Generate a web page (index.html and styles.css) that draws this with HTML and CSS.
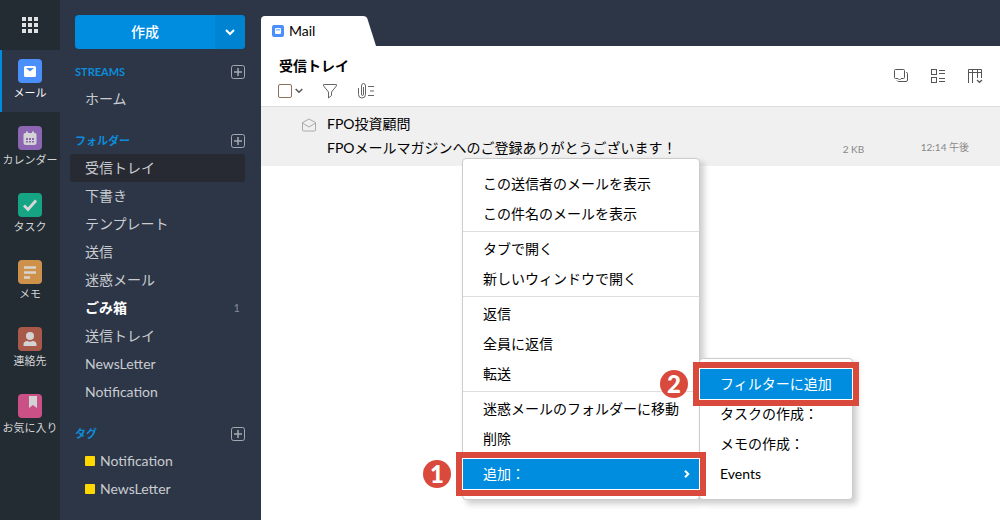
FILE: index.html
```html
<!DOCTYPE html>
<html lang="ja">
<head>
<meta charset="utf-8">
<meta name="viewport" content="width=device-width, initial-scale=1">
<title>Mail</title>
<link rel="stylesheet" href="styles.css">
</head>
<body>
<div class="app">
  <nav class="rail" aria-label="アプリ">
    <button class="launcher" type="button" aria-label="アプリ一覧">
      <svg width="16" height="16" viewBox="0 0 16 16" fill="#dfe1e3"><path d="M0 0h4v4H0zM6 0h4v4H6zM12 0h4v4h-4zM0 6h4v4H0zM6 6h4v4H6zM12 6h4v4h-4zM0 12h4v4H0zM6 12h4v4H6zM12 12h4v4h-4z"/></svg>
    </button>
    <ul class="rail-list">
      <li><a class="rail-item current" href="#mail">
        <svg width="24" height="24" viewBox="0 0 24 24"><rect width="24" height="24" rx="4" fill="#4a8ffa"/><rect x="6" y="7" width="12" height="11" rx="1.5" fill="#fff"/><path d="M8 9h8l-4 3.4z" fill="#4a8ffa"/></svg>
        <span>メール</span></a></li>
      <li><a class="rail-item" href="#calendar">
        <svg width="24" height="24" viewBox="0 0 24 24"><rect width="24" height="24" rx="4" fill="#8c66b2"/><path d="M7 7h1V5.500h2V7h4V5.500h2V7h1q1.500 0 1.500 1.500v8Q18.500 19 16 19H8q-2.500 0-2.500-2.500v-8Q5.500 7 7 7z" fill="#d3d3d3"/><path d="M8 12h2v2H8zM11 12h2v2h-2zM14 12h2v2h-2zM8 15h2v1.500H8zM11 15h2v1.500h-2zM14 15h2v1.500h-2z" fill="#8c66b2"/></svg>
        <span>カレンダー</span></a></li>
      <li><a class="rail-item" href="#tasks">
        <svg width="24" height="24" viewBox="0 0 24 24"><rect width="24" height="24" rx="4" fill="#15a584"/><path d="M6 12.500l4 4 8-9" fill="none" stroke="#d8d8d8" stroke-width="2.800"/></svg>
        <span>タスク</span></a></li>
      <li><a class="rail-item" href="#notes">
        <svg width="24" height="24" viewBox="0 0 24 24"><rect width="24" height="24" rx="4" fill="#ce914c"/><path d="M6 7.500h12M6 12.500h12M6 17.500h6" stroke="#d8d3cc" stroke-width="2.400"/></svg>
        <span>メモ</span></a></li>
      <li><a class="rail-item" href="#contacts">
        <svg width="24" height="24" viewBox="0 0 24 24"><rect width="24" height="24" rx="4" fill="#a8594a"/><circle cx="12" cy="9" r="4" fill="#d3d3d3"/><path d="M5.500 19v-1.500q0-3.500 4-3.500 2.500 1.500 5 0 4 0 4 3.500V19z" fill="#d3d3d3"/></svg>
        <span>連絡先</span></a></li>
      <li><a class="rail-item" href="#bookmarks">
        <svg width="24" height="24" viewBox="0 0 24 24"><rect width="24" height="24" rx="4" fill="#cb5085"/><path d="M11 2h8v12l-4-3-4 3z" fill="#d3d3d3"/></svg>
        <span>お気に入り</span></a></li>
    </ul>
  </nav>

  <aside class="sidebar">
    <div class="compose">
      <button class="compose-main" type="button">作成</button>
      <button class="compose-more" type="button" aria-label="その他の作成">
        <svg width="10" height="8" viewBox="0 0 10 8" fill="none" stroke="#fff" stroke-width="2"><path d="M1 2l4 4 4-4"/></svg>
      </button>
    </div>

    <section>
      <div class="group-head"><h2>STREAMS</h2>
        <button class="add" type="button" aria-label="追加"><svg width="14" height="14" viewBox="0 0 14 14" fill="none" stroke="#a4a9b0"><rect x=".5" y=".5" width="13" height="13" rx="2"/><path d="M3 7h8M7 3v8" stroke-width="1.500"/></svg></button></div>
      <ul class="links"><li><a href="#home">ホーム</a></li></ul>
    </section>

    <section>
      <div class="group-head"><h2>フォルダー</h2>
        <button class="add" type="button" aria-label="フォルダーを追加"><svg width="14" height="14" viewBox="0 0 14 14" fill="none" stroke="#a4a9b0"><rect x=".5" y=".5" width="13" height="13" rx="2"/><path d="M3 7h8M7 3v8" stroke-width="1.500"/></svg></button></div>
      <ul class="links">
        <li><a class="selected" href="#inbox">受信トレイ</a></li>
        <li><a href="#drafts">下書き</a></li>
        <li><a href="#templates">テンプレート</a></li>
        <li><a href="#sent">送信</a></li>
        <li><a href="#spam">迷惑メール</a></li>
        <li><a class="unread" href="#trash">ごみ箱<span class="count">1</span></a></li>
        <li><a href="#outbox">送信トレイ</a></li>
        <li><a href="#newsletter">NewsLetter</a></li>
        <li><a href="#notification">Notification</a></li>
      </ul>
    </section>

    <section>
      <div class="group-head"><h2>タグ</h2>
        <button class="add" type="button" aria-label="タグを追加"><svg width="14" height="14" viewBox="0 0 14 14" fill="none" stroke="#a4a9b0"><rect x=".5" y=".5" width="13" height="13" rx="2"/><path d="M3 7h8M7 3v8" stroke-width="1.500"/></svg></button></div>
      <ul class="links">
        <li><a href="#tag-notification"><span class="tag"></span>Notification</a></li>
        <li><a href="#tag-newsletter"><span class="tag"></span>NewsLetter</a></li>
      </ul>
    </section>
  </aside>

  <div class="workspace">
    <div class="tabs">
      <button class="tab" type="button">
        <svg width="12" height="12" viewBox="0 0 12 12"><rect width="12" height="12" rx="2" fill="#4a8ffa"/><rect x="3" y="3" width="6" height="6" rx="1" fill="#fff"/><path d="M4 4h4v1.500H4z" fill="#8db8fb"/></svg>
        Mail
      </button>
      <svg class="tab-edge" width="16" height="30" viewBox="0 0 16 30" fill="#fff"><path d="M0 0h3q3.500 0 4.500 3L16 30H0z"/></svg>
    </div>

    <main class="panel">
      <header class="toolbar">
        <div class="toolbar-main">
          <h1>受信トレイ</h1>
          <div class="tools">
            <div class="pick">
              <input type="checkbox" aria-label="すべて選択">
              <button class="icon" type="button" aria-label="選択メニュー"><svg width="8" height="6" viewBox="0 0 8 6" fill="none" stroke="#555" stroke-width="1.500"><path d="M.7 1L4 4.300 7.300 1"/></svg></button>
            </div>
            <button class="icon" type="button" aria-label="フィルター"><svg width="16" height="16" viewBox="0 0 16 16" fill="none" stroke="#666"><path d="M1.500 1.500h13v1.300L9.500 9v3.500L6.500 15V9L1.500 2.800z"/></svg></button>
            <button class="icon" type="button" aria-label="添付ファイル"><svg width="18" height="16" viewBox="0 0 18 16" fill="none" stroke="#666"><path d="M1.500 5v6.500q0 3.500 3.500 3.500t3.500-3.500V3Q8.500.5 6.500.5T4.500 3v8q0 1.500 1 1.500t1-1.500V4M11 3.500h6M13 8h4M11 12.500h6"/></svg></button>
          </div>
        </div>
        <div class="view-tools">
          <button class="icon" type="button" aria-label="プレビュー"><svg width="16" height="16" viewBox="0 0 16 16" fill="none" stroke="#555"><path d="M2.500 1.500h8q1 0 1 1v7q0 1-1 1H8L6.500 12 5 10.500H2.500q-1 0-1-1v-7q0-1 1-1zM13 4.500h.5q1 0 1 1V12q0 1.500-1.500 1.500H5.500q-1 0-1.500-1"/></svg></button>
          <button class="icon" type="button" aria-label="リスト表示"><svg width="16" height="16" viewBox="0 0 16 16" fill="none" stroke="#555"><rect x="1.500" y="1.500" width="5" height="5"/><rect x="1.500" y="9.500" width="5" height="5"/><path d="M9 2.500h6M9 5.500h6M9 10.500h6M9 13.500h6"/></svg></button>
          <button class="icon" type="button" aria-label="列の設定"><svg width="16" height="16" viewBox="0 0 16 16" fill="none" stroke="#555"><path d="M1.500 15V1.500h13V10M1.500 4.500h13M5.500 1.500V15M10.500 1.500V10"/><path d="M10 12l2.500 2.300L15 12" stroke-width="1.300"/></svg></button>
        </div>
      </header>

      <article class="message">
        <svg class="envelope" width="16" height="14" viewBox="0 0 16 14" fill="none" stroke="#aaa"><path d="M1.500 4.500L8 1l6.500 3.500V12q0 1-1 1h-11q-1 0-1-1zM1.500 5L8 9l6.500-4"/></svg>
        <div class="message-text">
          <p>FPO投資顧問</p>
          <p>FPOメールマガジンへのご登録ありがとうございます！</p>
        </div>
        <span class="size">2 KB</span>
        <time class="time">12:14 午後</time>
      </article>
    </main>
  </div>
</div>

<div class="menu context" role="menu">
  <div class="menu-group">
    <button type="button" role="menuitem">この送信者のメールを表示</button>
    <button type="button" role="menuitem">この件名のメールを表示</button>
  </div>
  <div class="menu-group">
    <button type="button" role="menuitem">タブで開く</button>
    <button type="button" role="menuitem">新しいウィンドウで開く</button>
  </div>
  <div class="menu-group">
    <button type="button" role="menuitem">返信</button>
    <button type="button" role="menuitem">全員に返信</button>
    <button type="button" role="menuitem">転送</button>
  </div>
  <div class="menu-group">
    <button type="button" role="menuitem">迷惑メールのフォルダーに移動</button>
    <button type="button" role="menuitem">削除</button>
  </div>
  <div class="menu-group marked">
    <button class="active" type="button" role="menuitem">追加：
      <svg width="6" height="8" viewBox="0 0 6 8" fill="none" stroke="#fff" stroke-width="2"><path d="M1 .7L4.300 4 1 7.300"/></svg>
    </button>
    <span class="step">1</span>
  </div>
</div>

<div class="menu submenu" role="menu">
  <div class="marked">
    <button class="active" type="button" role="menuitem">フィルターに追加</button>
    <span class="step">2</span>
  </div>
  <button type="button" role="menuitem">タスクの作成：</button>
  <button type="button" role="menuitem">メモの作成：</button>
  <button type="button" role="menuitem">Events</button>
</div>
</body>
</html>
```
FILE: styles.css
```css
* { box-sizing: border-box; }

body {
  margin: 0;
  font: 14px/20px Lato, "Noto Sans CJK JP", sans-serif;
  color: #000;
  background: #2d3646;
}

h1, h2, p, ul { margin: 0; padding: 0; }
ul { list-style: none; }
svg { display: block; flex: none; }
a { color: inherit; text-decoration: none; }

button {
  margin: 0;
  padding: 0;
  border: 0;
  background: none;
  font: inherit;
  color: inherit;
  cursor: pointer;
}

.app { display: flex; min-height: 100vh; }

/* App rail */
.rail { flex: none; width: 60px; background: #232b33; color: #d3d5d6; }

.launcher {
  display: flex;
  align-items: center;
  justify-content: center;
  width: 100%;
  height: 50px;
}

.rail-list { display: grid; gap: 5px; }

.rail-item {
  display: flex;
  flex-direction: column;
  align-items: center;
  height: 62px;
  padding-top: 9px;
  font-size: 11px;
  white-space: nowrap;
}

.rail-item.current {
  background: #2d3646;
  box-shadow: inset 2px 0 #008ddf;
  color: #fff;
}

/* Sidebar */
.sidebar {
  flex: none;
  display: flex;
  flex-direction: column;
  gap: 15px;
  width: 201px;
  padding: 15px 16px 15px 10px;
  color: #c9ccd1;
}

.compose {
  display: flex;
  height: 34px;
  margin: 0 0 -5px 5px;
  border-radius: 4px;
  overflow: hidden;
  background: #008ddf;
  color: #fff;
}

.compose-main { flex: 1; font-weight: 500; }

.compose-more {
  display: flex;
  align-items: center;
  justify-content: center;
  width: 30px;
  background: #0084d2;
}

.group-head {
  display: flex;
  align-items: center;
  justify-content: space-between;
  height: 26px;
  padding-left: 5px;
}

.group-head h2 {
  font-size: 11px;
  font-weight: 700;
  line-height: 20px;
  color: #0b8ddb;
}

.links a {
  display: flex;
  align-items: center;
  height: 28px;
  padding: 0 5px 0 15px;
  border-radius: 3px;
}

.links .selected { background: #282a33; }
.links .unread { color: #fff; font-weight: 700; }

.count {
  margin-left: auto;
  font-size: 11px;
  font-weight: 400;
  color: #858d99;
}

.tag {
  width: 10px;
  height: 10px;
  margin-right: 5px;
  border-radius: 1px;
  background: #ffd800;
}

/* Workspace */
.workspace { flex: 1; min-width: 0; display: flex; flex-direction: column; }
.tabs { display: flex; padding-top: 16px; }

.tab {
  display: flex;
  align-items: center;
  gap: 5px;
  width: 99px;
  height: 30px;
  padding-left: 11px;
  border-radius: 4px 0 0 0;
  background: #fff;
}

.panel { flex: 1; background: #fff; }

.toolbar {
  display: flex;
  justify-content: space-between;
  padding: 10px 17px 4px;
  border-bottom: 1px solid #dedede;
}

.toolbar h1 { padding-left: 1px; font-size: 14px; font-weight: 700; line-height: 20px; }

.tools { display: flex; align-items: center; gap: 19px; height: 26px; padding-top: 4px; }
.pick { display: flex; align-items: center; gap: 3px; }

.pick input {
  appearance: none;
  width: 14px;
  height: 14px;
  margin: 0;
  border: 1px solid #8d6f5b;
  border-radius: 2px;
}

.view-tools { display: flex; align-items: center; gap: 21px; height: 40px; }

.message {
  display: flex;
  gap: 10px;
  padding: 5px 31px 6px 40px;
  background: #f0f0f0;
}

.message-text { flex: 1; line-height: 24px; }
.envelope { margin-top: 6px; }

.size, .time { align-self: flex-end; font-size: 10px; color: #888; }
.size { width: 68px; margin-bottom: 1px; }
.time { margin-bottom: 3px; }

/* Menus */
.menu {
  position: absolute;
  padding: 10px 0;
  border: 1px solid #ccc;
  border-radius: 4px;
  background: #fff;
  box-shadow: 4px 4px 6px rgba(0, 0, 0, .2);
}

.context { left: 462px; top: 158px; width: 238px; }
.submenu { left: 699px; top: 358px; width: 154px; }

.menu-group + .menu-group {
  margin-top: 2px;
  padding-top: 2px;
  border-top: 1px solid #dedede;
}

.menu button {
  display: flex;
  align-items: center;
  justify-content: space-between;
  width: 100%;
  height: 30px;
  padding: 0 9px 0 20px;
  white-space: nowrap;
}

.menu .active { background: #008ddf; color: #fff; }

/* Highlighted steps */
.marked { position: relative; z-index: 2; }

.marked .active {
  box-shadow: 0 0 0 1px #fff, 0 0 0 7px #d94a3d;
}

.step {
  position: absolute;
  right: 100%;
  bottom: 1px;
  width: 28px;
  margin-right: 12px;
  border-radius: 50%;
  background: #d94a3d;
  color: #fff;
  font-size: 24px;
  font-weight: 900;
  line-height: 28px;
  text-align: center;
}
```
